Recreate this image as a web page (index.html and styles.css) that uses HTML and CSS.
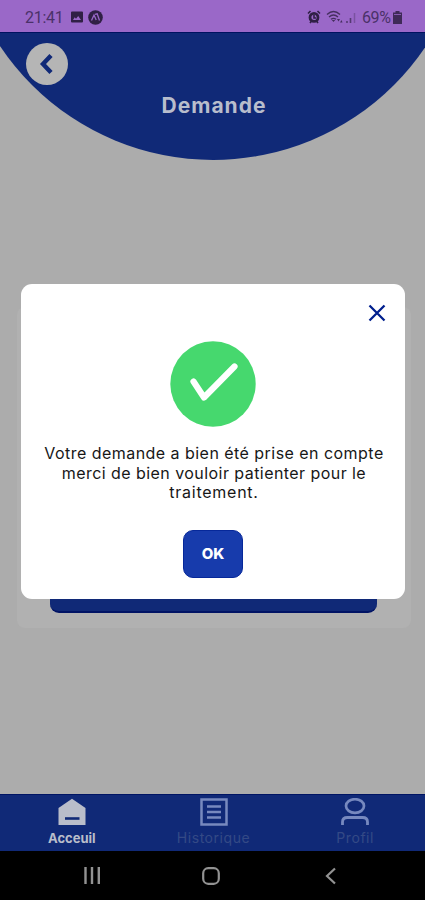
FILE: index.html
```html
<!DOCTYPE html>
<html lang="fr">
<head>
<meta charset="utf-8">
<meta name="viewport" content="width=device-width, initial-scale=1">
<title>Demande</title>
<link rel="stylesheet" href="styles.css">
</head>
<body>
<div class="phone">
  <div class="status">
    <div class="status-left">
      <span class="clock">21:41</span>
      <svg class="photo" width="12" height="12" viewBox="0 0 12 12"><path fill="currentColor" fill-rule="evenodd" d="M1 0.5h10a1 1 0 0 1 1 1v9a1 1 0 0 1-1 1H1a1 1 0 0 1-1-1v-9a1 1 0 0 1 1-1zM2 9h8L7.2 5 5 7.7 3.7 6.2z"/></svg>
      <svg width="15" height="15" viewBox="0 0 15 15"><circle cx="7.5" cy="7.5" r="7.3" fill="currentColor"/><path d="M3.5 10.5 6 5l2.2 5M7 4.3l2.2-.5 2.3 6.7" fill="none" stroke="#9a68c8" stroke-width="1.3"/></svg>
    </div>
    <div class="status-right">
      <svg width="14" height="14" viewBox="0 0 14 14"><circle cx="7" cy="7.4" r="4" fill="none" stroke="currentColor" stroke-width="2.8"/><path d="M1 3.5 3.5 1M13 3.5 10.5 1M3 13l1.5-2M11 13l-1.5-2M7 5v3h2" fill="none" stroke="currentColor" stroke-width="1.6"/></svg>
      <svg class="wifi" width="17" height="14" viewBox="0 0 17 14"><path d="M1 4.5q6.500-6 13 0M3 7q4.500-4 9 0M5 9.300q2.500-2 5 0" fill="none" stroke="currentColor" stroke-width="1.3"/><path d="M7.500 12 5.800 10h3.400zM11 9l1.500 2.500L14 9zM14 12.500l1.500-2.500 1 2.500z" fill="currentColor"/></svg>
      <svg class="signal" width="10" height="13" viewBox="0 0 10 13"><path d="M1 10v2M4.500 7v5" stroke="currentColor" stroke-width="1.6"/><path d="M8.500 2v10" stroke="currentColor" stroke-width="1.5" opacity=".45"/></svg>
      <span class="percent">69%</span>
      <svg class="battery" width="9" height="13" viewBox="0 0 9 13"><path d="M2.500 0h4v1.500H9V13H0V1.500h2.500z" fill="currentColor"/><path d="M1 3.500h7" stroke="#9a68c8" stroke-width=".8"/></svg>
    </div>
  </div>
  <main class="screen">
    <header class="hero">
      <button class="back" aria-label="Retour"><svg width="42" height="42" viewBox="0 0 42 42"><path d="M25 12.500 17 21l8 8.500" fill="none" stroke="currentColor" stroke-width="4.4"/></svg></button>
      <h1>Demande</h1>
    </header>
    <section class="form-card"><div class="submit"></div></section>
    <section class="modal" role="dialog">
      <button class="close" aria-label="Fermer"><svg width="18" height="18" viewBox="0 0 18 18"><path d="m1.500 1.500 15 15m0-15-15 15" stroke="currentColor" stroke-width="2.3"/></svg></button>
      <svg class="success" width="86" height="86" viewBox="0 0 86 86"><circle cx="43" cy="43" r="42.7" fill="#46d86e"/><path d="M23.500 40.500 34 56.500 64.500 25.500" fill="none" stroke="#fff" stroke-width="6.2" stroke-linecap="round" stroke-linejoin="round"/></svg>
      <p class="message"><span class="line first">Votre demande a bien été prise en compte</span> <span class="line second">merci de bien vouloir patienter pour le</span> <span class="line third">traitement.</span></p>
      <button class="ok">OK</button>
    </section>
  </main>
  <nav class="tabs">
    <a class="tab active"><svg width="28" height="28" viewBox="0 0 28 28"><path d="M14 0.800 27.500 10v17H.500V10z" fill="currentColor"/><path d="M7 20.500h14.500" stroke="#102977" stroke-width="2.6"/></svg><span class="home-label">Acceuil</span></a>
    <a class="tab"><svg width="28" height="28" viewBox="0 0 28 28"><path d="M1.500 1.500h25v25h-25zM7 8.500h14M7 14h14M7 19.500h14" fill="none" stroke="currentColor" stroke-width="2.5"/></svg><span class="history-label">Historique</span></a>
    <a class="tab"><svg width="28" height="28" viewBox="0 0 28 28"><ellipse cx="14" cy="8" rx="9" ry="6.8" fill="none" stroke="currentColor" stroke-width="2.7"/><path d="M1.500 27v-3q0-4.500 5-4.500h15q5 0 5 4.500v3" fill="none" stroke="currentColor" stroke-width="2.8"/></svg><span class="profile-label">Profil</span></a>
  </nav>
  <div class="system">
    <svg width="18" height="17" viewBox="0 0 18 17"><path d="M2.500 0v17M9 0v17M15.800 0v17" stroke="currentColor" stroke-width="2.4"/></svg>
    <svg width="18" height="18" viewBox="0 0 18 18"><rect x="1.200" y="1.200" width="15.600" height="15.600" rx="5" fill="none" stroke="currentColor" stroke-width="2.2"/></svg>
    <svg width="12" height="18" viewBox="0 0 12 18"><path d="M10 1.500 2 9l8 7.500" fill="none" stroke="currentColor" stroke-width="2.2"/></svg>
  </div>
</div>
</body>
</html>
```
FILE: styles.css
```css
* { box-sizing: border-box; }
body { margin: 0; font-family: Inter, "Liberation Sans", sans-serif; }
button { border: 0; padding: 0; font: inherit; }
svg { display: block; flex: none; }
.phone { width: 425px; height: 900px; display: flex; flex-direction: column; background: #acacac; overflow: hidden; }
.status { height: 32px; flex: none; display: flex; align-items: center; justify-content: space-between; padding: 2px 23px 0 25px; background: #9a68c8; color: #302045; font-family: Roboto, sans-serif; font-size: 16px; }
.status-left, .status-right { display: flex; align-items: center; }
.clock { width: 46px; color: #4a3169; letter-spacing: -.3px; }
.photo { margin-right: 5px; }
.wifi { margin-left: 5px; opacity: .8; }
.signal { margin: 0 6px 0 3px; opacity: .65; }
.percent { width: 31px; color: #4a3169; font-size: 16px; letter-spacing: -.4px; }
.battery { opacity: .85; }
.screen { flex: 1; position: relative; min-height: 0; }
.hero { height: 128px; padding-top: 10px; background: #102977; clip-path: circle(256px at 213px -128px); border-top: 1px solid #00125f; }
.back { display: block; width: 42px; height: 42px; margin-left: 26px; border-radius: 50%; background: #b5b5b5; color: #102977; }
h1 { margin: 8px 0 0 3px; text-align: center; color: #b8bdcc; font-size: 21px; line-height: 26px; font-weight: 700; letter-spacing: 1px; }
.form-card { display: flex; align-items: flex-end; height: 321px; margin: 147px 14px 0 17px; padding: 0 34px 15px 33px; border-radius: 8px; background: #b1b1b1; }
.submit { flex: 1; height: 48px; border-radius: 9px; background: #102977; border-bottom: 2px solid #001364; }
.modal { position: absolute; top: 252px; left: 21px; width: 384px; height: 315px; display: flex; flex-direction: column; align-items: center; border-radius: 11px; background: #fff; }
.close { align-self: flex-end; margin: 20px 19px 0 0; background: none; color: #001f8e; }
.success { margin-top: 19px; }
.message { margin: 17px 0 0; padding-left: 2px; color: #171717; text-align: center; font-size: 16px; line-height: 19.5px; }
.line { display: block; white-space: nowrap; }
.first { letter-spacing: .46px; }
.second { letter-spacing: .44px; }
.third { letter-spacing: .75px; }
.ok { width: 60px; height: 48px; margin-top: 27px; border-radius: 10px; background: #173bac; border: 1px solid #06289a; color: #fff; font-weight: 800; font-size: 15px; }
.tabs { height: 57px; flex: none; display: flex; justify-content: space-between; padding: 3px 0 0; background: #102977; border-top: 1px solid #001563; color: #7789bf; }
.tab { flex: 1; display: flex; flex-direction: column; align-items: center; padding-left: 2px; font-size: 14px; line-height: 18px; letter-spacing: .55px; }
.tab.active { color: #b9bdca; font-weight: 700; font-size: 13px; letter-spacing: 0; }
.tab span { margin-top: 3px; color: #344986; }
.tab .home-label { color: #b9bdca; }
.system { height: 49px; flex: none; display: flex; align-items: center; padding-left: 83px; background: #000; color: #929292; }
.system svg:nth-child(2) { margin-left: 101px; }
.system svg:nth-child(3) { margin-left: 105px; }
```
